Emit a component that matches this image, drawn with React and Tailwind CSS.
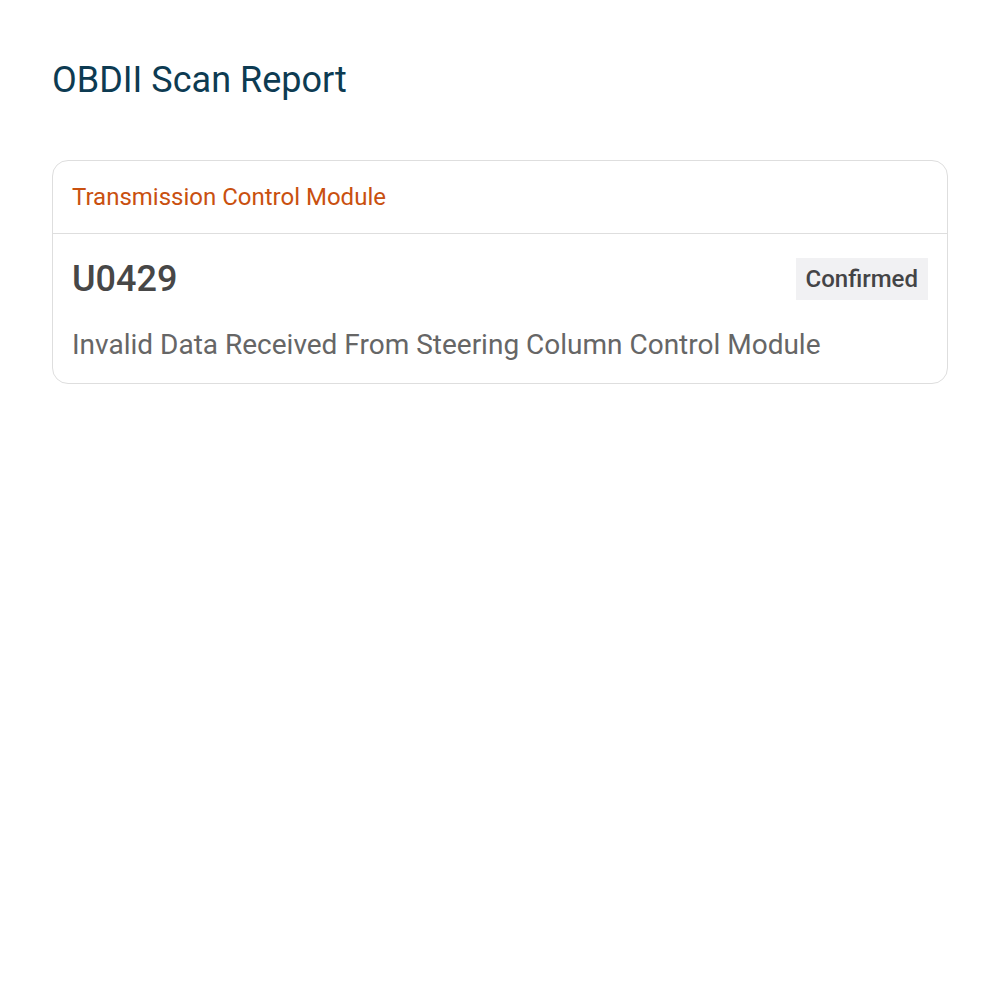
const faults = [
  {
    module: "Transmission Control Module",
    code: "U0429",
    status: "Confirmed",
    description: "Invalid Data Received From Steering Column Control Module",
  },
];

const FaultCard = ({ fault }) => {
  return (
    <div className="rounded-2xl border border-[#dedede] bg-white">
      <div className="h-[73px] flex items-center px-[19px] border-b border-[#dedede]">
        <span className="text-[24px] text-[#c9500f]">{fault.module}</span>
      </div>
      <div className="px-[19px] pt-6 pb-6">
        <div className="flex items-center justify-between">
          <span className="text-[36px] leading-none font-medium text-[#474747]">
            {fault.code}
          </span>
          <span className="bg-[#f1f1f3] px-[10px] h-[42px] flex items-center text-[24px] font-medium text-[#444446]">
            {fault.status}
          </span>
        </div>
        <p className="mt-[31px] text-[28px] leading-none text-[#666666]">
          {fault.description}
        </p>
      </div>
    </div>
  );
};

const App = () => {
  return (
    <div className="min-h-screen bg-white font-['Roboto',sans-serif] px-[52px] pt-[58px]">
      <h1 className="text-[36px] leading-[44px] text-[#0d3b52]">OBDII Scan Report</h1>
      <div className="mt-[58px] flex flex-col gap-4">
        {faults.map((fault) => (
          <FaultCard key={fault.code} fault={fault} />
        ))}
      </div>
    </div>
  );
};

export default App;
